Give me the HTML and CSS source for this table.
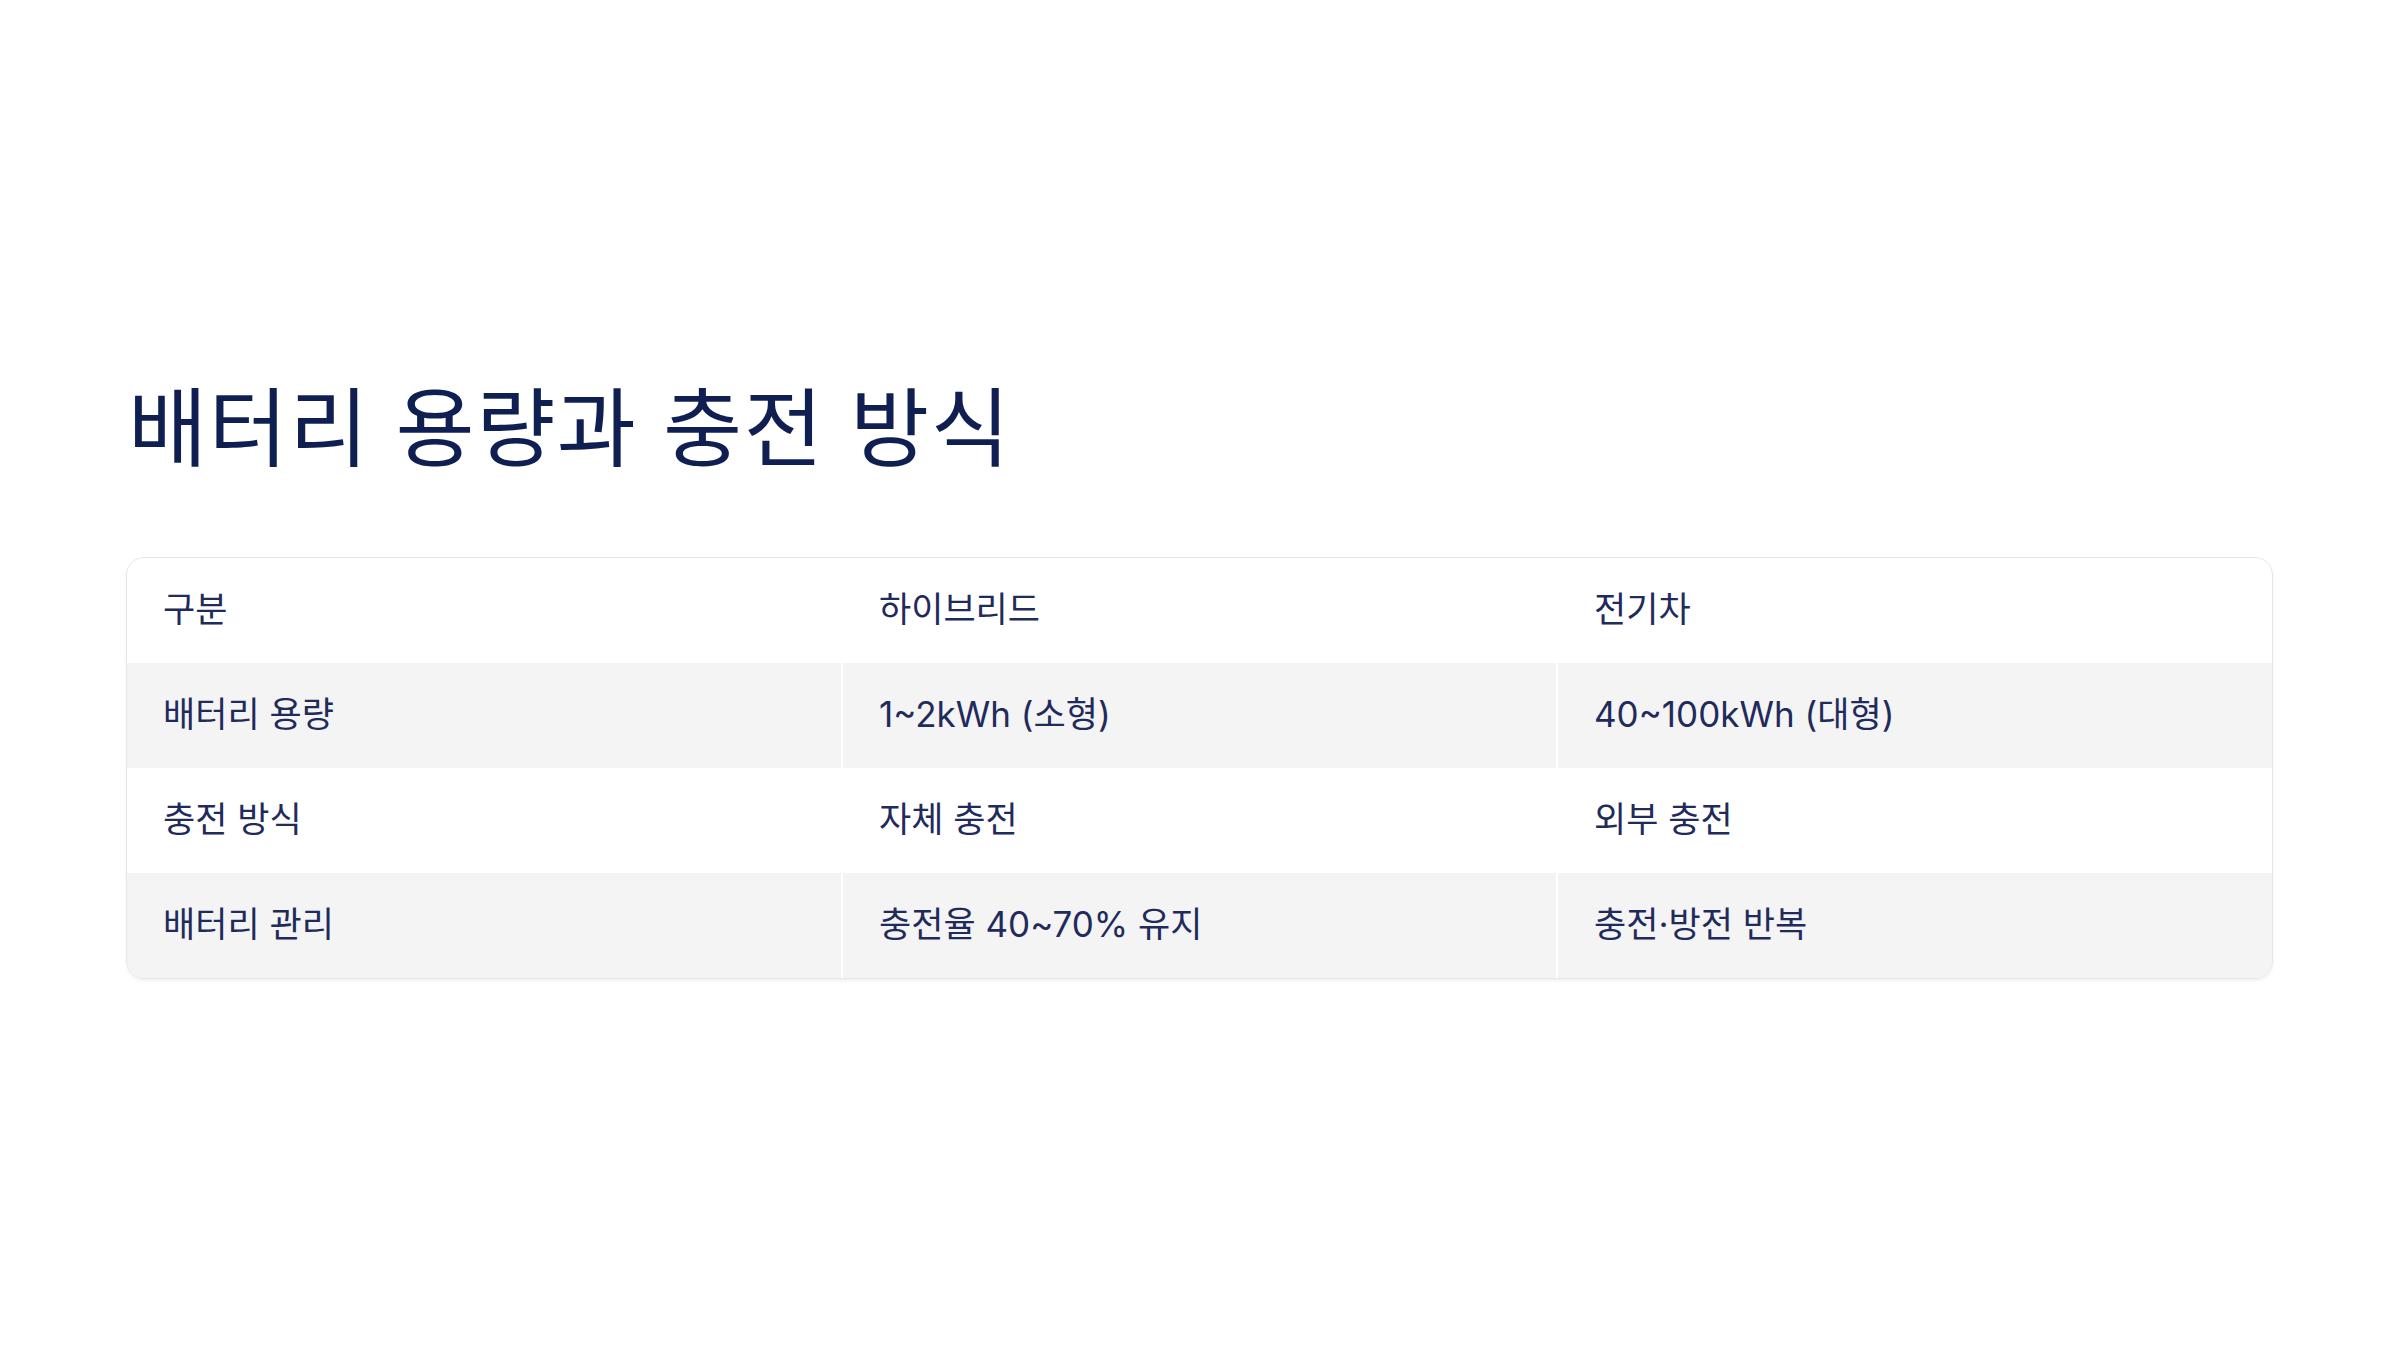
FILE: index.html
```html
<!DOCTYPE html>
<html lang="ko">
<head>
    <meta charset="UTF-8">
    <title>배터리 용량과 충전 방식</title>
    <link rel="stylesheet" href="styles.css">
</head>
<body>
<div class="slide">
    <h1 class="slide-title">배터리 용량과 충전 방식</h1>

    <!-- 비교표 -->
    <div class="compare-wrap">
        <table class="compare-table">
            <thead>
                <tr>
                    <th>구분</th>
                    <th>하이브리드</th>
                    <th>전기차</th>
                </tr>
            </thead>
            <tbody>
                <tr>
                    <td>배터리 용량</td>
                    <td>1~2kWh (소형)</td>
                    <td>40~100kWh (대형)</td>
                </tr>
                <tr>
                    <td>충전 방식</td>
                    <td>자체 충전</td>
                    <td>외부 충전</td>
                </tr>
                <tr>
                    <td>배터리 관리</td>
                    <td>충전율 40~70% 유지</td>
                    <td>충전·방전 반복</td>
                </tr>
            </tbody>
        </table>
    </div>
</div>
</body>
</html>
```

FILE: styles.css
```css
html, body {
    margin: 0;
    padding: 0;
    background: #ffffff;
}

body {
    font-family: "Inter", "Noto Sans CJK KR", sans-serif;
    color: #1f2b5b;
}

.slide {
    width: 2400px;
    height: 1350px;
    box-sizing: border-box;
    padding: 378px 127px 0 126px;
    display: flex;
    flex-direction: column;
}

/* 제목 */
.slide-title {
    margin: 0 0 76px 2px;
    font-size: 86px;
    font-weight: 400;
    line-height: 1.2;
    letter-spacing: 1.5px;
    color: #0f1f52;
}

/* 표 */
.compare-wrap {
    border: 1px solid #e6e6e8;
    border-radius: 18px;
    overflow: hidden;
    box-shadow: 0 2px 3px rgba(0, 0, 0, 0.06);
}

.compare-table {
    width: 100%;
    border-collapse: collapse;
    table-layout: fixed;
}

.compare-table th,
.compare-table td {
    height: 105px;
    padding: 0 36px 8px;
    box-sizing: border-box;
    text-align: left;
    vertical-align: middle;
    font-size: 35px;
    font-weight: 400;
    letter-spacing: 0;
    color: #1f2b5b;
    border-left: 2px solid #ffffff;
}

.compare-table th:first-child,
.compare-table td:first-child {
    border-left: none;
}

.compare-table tbody tr:nth-child(odd) td {
    background: #f4f4f5;
}
```
